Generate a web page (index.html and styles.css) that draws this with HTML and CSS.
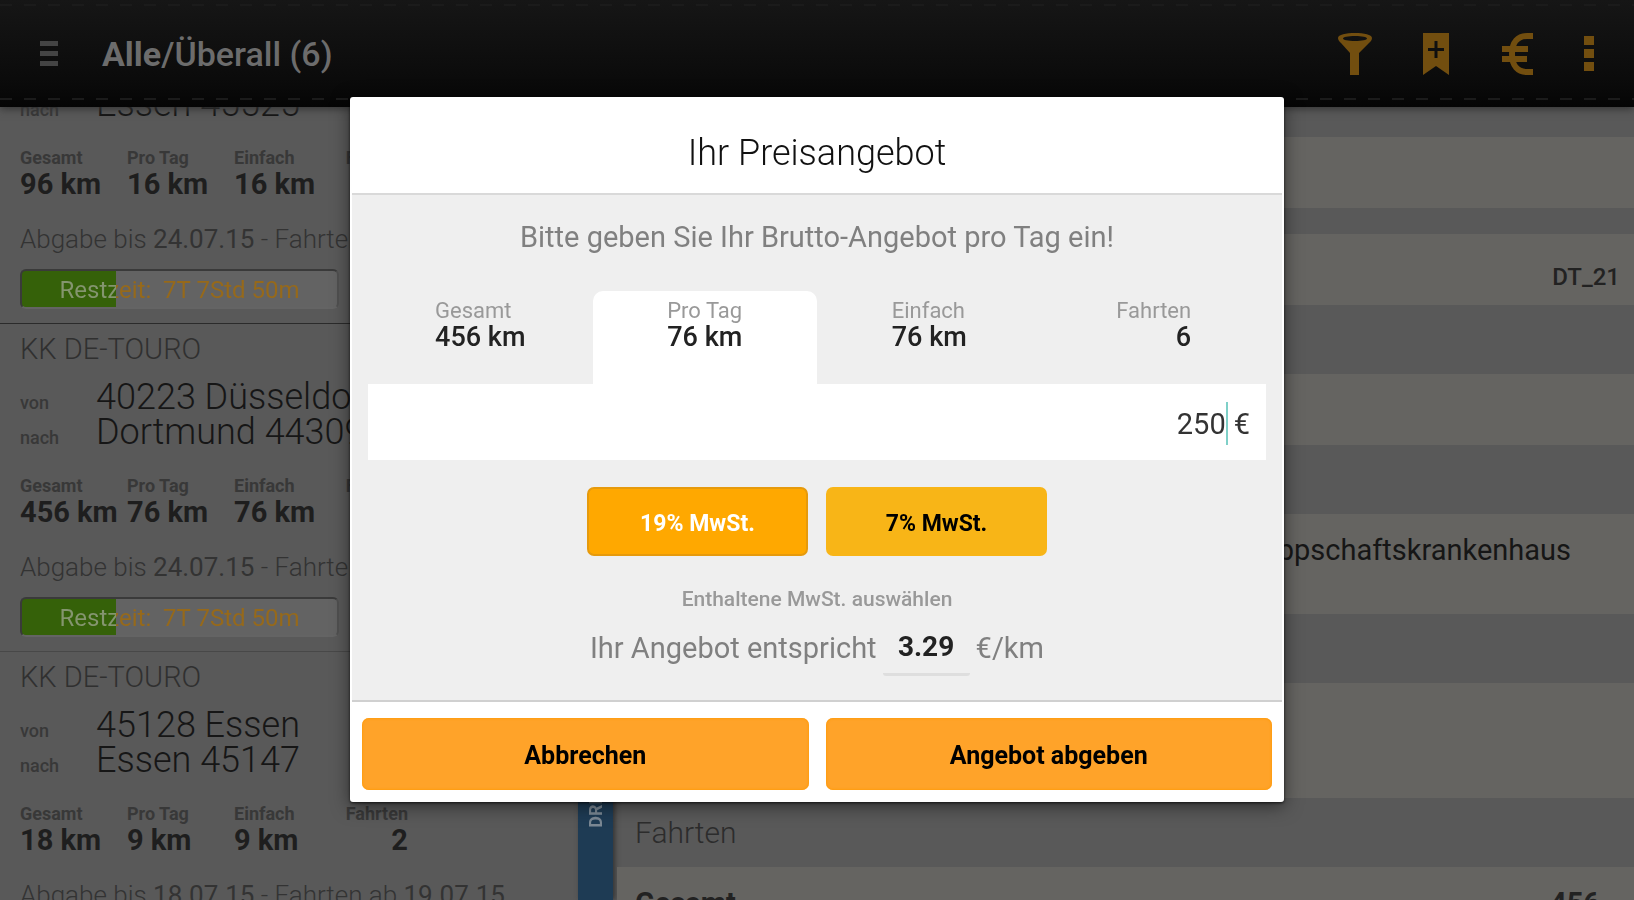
FILE: index.html
```html
<!DOCTYPE html>
<html lang="de">
<head>
    <meta charset="UTF-8">
    <meta name="viewport" content="width=device-width, initial-scale=1.0">
    <title>Ihr Preisangebot</title>
    <link rel="stylesheet" href="styles.css">
</head>
<body>

<div class="app">
    <header class="topbar">
        <button type="button" class="icon-btn menu-btn" aria-label="Menü">
            <svg width="18" height="26" viewBox="0 0 18 26"><path d="M0 0h18v5H0zM0 10h18v5H0zM0 20h18v5H0z"/></svg>
        </button>
        <h1><b>Alle</b>/Überall (6)</h1>
        <nav class="actions">
            <button type="button" class="icon-btn" aria-label="Filter">
                <svg width="34" height="44" viewBox="0 0 34 44"><path fill-rule="evenodd" d="M17 1C8 1 0 2.500 0 6c0 2 1 3 3 5l9 10v22h9V21l10-10c2-2 3-3 3-5 0-3.500-8-5-17-5zm0 3c7 0 12 1 12 2.500S24 9 17 9 5 8 5 6.500 10 4 17 4z"/></svg>
            </button>
            <button type="button" class="icon-btn" aria-label="Merken">
                <svg width="28" height="44" viewBox="0 0 28 44"><path fill-rule="evenodd" d="M1 1h26v42l-13-9-13 9zM12.500 9v7H6v3h6.500v7h3v-7H22v-3h-6.500V9z"/></svg>
            </button>
            <button type="button" class="icon-btn" aria-label="Angebot">
                <svg width="34" height="44" viewBox="0 0 34 44"><path class="line" d="M33 4h-6C18 4 12 10 12 22s6 18 15 18h6M2 17h26M2 27h25"/></svg>
            </button>
            <button type="button" class="icon-btn" aria-label="Mehr">
                <svg width="10" height="38" viewBox="0 0 10 38"><path d="M0 1h10v9H0zM0 14h10v9H0zM0 27h10v9H0z"/></svg>
            </button>
        </nav>
    </header>

    <main class="content">
        <section class="list">
            <article class="tour">
                <div class="route"><small>nach</small><span>Essen 45525</span></div>
                <dl class="distances">
                    <div><dt>Gesamt</dt><dd>96 km</dd></div>
                    <div><dt>Pro Tag</dt><dd>16 km</dd></div>
                    <div><dt>Einfach</dt><dd>16 km</dd></div>
                    <div><dt>Fahrten</dt><dd>6</dd></div>
                </dl>
                <p class="deadline">Abgabe bis <b>24.07.15</b> - Fahrten ab 27.07.15</p>
                <div class="timer"><span>Restzeit: &nbsp;7T 7Std 50m</span></div>
            </article>
            <article class="tour">
                <h2>KK DE-TOURO</h2>
                <div class="route"><small>von</small><span>40223 Düsseldorf</span></div>
                <div class="route"><small>nach</small><span>Dortmund 44309</span></div>
                <dl class="distances">
                    <div><dt>Gesamt</dt><dd>456 km</dd></div>
                    <div><dt>Pro Tag</dt><dd>76 km</dd></div>
                    <div><dt>Einfach</dt><dd>76 km</dd></div>
                    <div><dt>Fahrten</dt><dd>6</dd></div>
                </dl>
                <p class="deadline">Abgabe bis <b>24.07.15</b> - Fahrten ab 27.07.15</p>
                <div class="timer"><span>Restzeit: &nbsp;7T 7Std 50m</span></div>
            </article>
            <article class="tour">
                <h2>KK DE-TOURO</h2>
                <div class="route"><small>von</small><span>45128 Essen</span></div>
                <div class="route"><small>nach</small><span>Essen 45147</span></div>
                <dl class="distances">
                    <div><dt>Gesamt</dt><dd>18 km</dd></div>
                    <div><dt>Pro Tag</dt><dd>9 km</dd></div>
                    <div><dt>Einfach</dt><dd>9 km</dd></div>
                    <div><dt>Fahrten</dt><dd>2</dd></div>
                </dl>
                <p class="deadline">Abgabe bis <b>18.07.15</b> - Fahrten ab <b>19.07.15</b></p>
            </article>
        </section>

        <aside class="rail"><span>DRK</span></aside>

        <section class="detail">
            <div class="gap"></div>
            <div class="row"></div>
            <div class="gap"></div>
            <div class="row code">DT_21</div>
            <div class="head"></div>
            <div class="row"></div>
            <div class="head"></div>
            <div class="row tall"><span>Knappschaftskrankenhaus</span></div>
            <div class="head"></div>
            <div class="row taller"></div>
            <div class="head">Fahrten</div>
            <div class="row total"><b>Gesamt</b><b>456</b></div>
        </section>
    </main>
</div>

<div class="overlay">
    <form class="dialog" role="dialog" aria-labelledby="dialogTitle">
        <h2 id="dialogTitle">Ihr Preisangebot</h2>
        <div class="dialog-body">
            <label class="hint" for="price">Bitte geben Sie Ihr Brutto-Angebot pro Tag ein!</label>
            <div class="tabs">
                <button type="button" class="tab"><span>Gesamt<b>456 km</b></span></button>
                <button type="button" class="tab active"><span>Pro Tag<b>76 km</b></span></button>
                <button type="button" class="tab"><span>Einfach<b>76 km</b></span></button>
                <button type="button" class="tab"><span>Fahrten<b>6</b></span></button>
            </div>
            <div class="price">
                <input type="text" id="price" name="price" value="250">
                <i class="caret"></i>
                <span>€</span>
            </div>
            <div class="vat">
                <button type="button" class="selected">19% MwSt.</button>
                <button type="button">7% MwSt.</button>
            </div>
            <p class="note">Enthaltene MwSt. auswählen</p>
            <div class="rate">
                <label for="rate">Ihr Angebot entspricht</label>
                <input type="text" id="rate" name="rate" value="3.29">
                <span>€/km</span>
            </div>
        </div>
        <div class="dialog-footer">
            <button type="button">Abbrechen</button>
            <button type="submit">Angebot abgeben</button>
        </div>
    </form>
</div>

</body>
</html>
```
FILE: styles.css
```css
* {
    box-sizing: border-box;
}
body {
    font-family: Roboto, "Liberation Sans", sans-serif;
    margin: 0;
    background-color: #595959;
    color: #222;
}
h1, h2, p, dl, dd {
    margin: 0;
}
button, input {
    font-family: inherit;
    border: 0;
    padding: 0;
    margin: 0;
    background: none;
}
.app {
    display: flex;
    flex-direction: column;
    height: 100vh;
    overflow: hidden;
}

/* top bar */
.topbar {
    display: flex;
    align-items: center;
    flex: none;
    height: 107px;
    padding: 0 40px;
    position: relative;
    background: linear-gradient(#161616, #0a0a0a 80%, #050505);
    box-shadow: 0 2px 8px #333;
    z-index: 1;
}
/* leather stitching */
.topbar::before, .topbar::after {
    content: "";
    position: absolute;
    left: 0;
    right: 0;
    height: 2px;
    background: repeating-linear-gradient(90deg, #1b1b1b 0 12px, transparent 12px 24px);
}
.topbar::before {
    top: 4px;
}
.topbar::after {
    bottom: 7px;
}
.topbar h1 {
    flex: 1;
    margin-left: 44px;
    font-size: 34px;
    line-height: 40px;
    font-weight: 500;
    color: #6c6c6c;
}
.topbar h1 b {
    font-weight: 700;
}
.icon-btn {
    display: flex;
    fill: #724e0f;
}
.menu-btn {
    fill: #444;
}
.icon-btn .line {
    fill: none;
    stroke: #724e0f;
    stroke-width: 6;
}
.actions {
    display: flex;
    align-items: center;
    gap: 50px;
}

/* tour list */
.content {
    display: flex;
    flex: 1;
    min-height: 0;
}
.list {
    width: 578px;
    flex: none;
    margin-top: -28px;
}
.tour {
    padding: 8px 20px 14px;
    border-bottom: 1px solid #484848;
}
.tour:first-child {
    border-bottom-color: #2b2b2b;
}
.tour h2 {
    font-size: 29px;
    line-height: 34px;
    font-weight: 300;
    color: #303030;
    margin-bottom: 14px;
}
.route {
    display: flex;
    align-items: baseline;
    height: 35px;
    font-size: 36px;
    line-height: 35px;
    font-weight: 300;
    color: #161616;
}
.route small {
    width: 76px;
    font-size: 18px;
    line-height: 20px;
    font-weight: 500;
    color: #383838;
}
.distances {
    display: flex;
    gap: 40px;
    margin: 24px 0 25px;
}
.distances div {
    width: 67px;
    white-space: nowrap;
}
.distances div:last-child {
    text-align: right;
}
.distances dt {
    font-size: 18px;
    line-height: 24px;
    font-weight: 700;
    color: #383838;
}
.distances dd {
    font-size: 29px;
    line-height: 28px;
    font-weight: 700;
    color: #1e1e1e;
}
.deadline {
    font-size: 26px;
    line-height: 32px;
    font-weight: 300;
    color: #333;
    margin-bottom: 14px;
}
.deadline b {
    font-weight: 400;
}
.timer {
    width: 319px;
    height: 40px;
    border: 2px solid #3a3a3a;
    border-right-color: #505050;
    border-bottom-color: #646464;
    border-radius: 6px;
    background: linear-gradient(90deg, #356109 30%, #636363 30%);
    font-size: 24px;
    line-height: 38px;
    text-align: center;
}
.timer span {
    display: block;
    background: linear-gradient(90deg, #84956f 30%, #96691a 30%);
    background-clip: text;
    -webkit-background-clip: text;
    color: transparent;
}

/* tour details */
.rail {
    display: flex;
    justify-content: center;
    align-items: flex-end;
    width: 35px;
    flex: none;
    padding-bottom: 72px;
    background-color: #1e3b54;
    color: #7b8894;
    box-shadow: 2px 0 5px #333;
}
.rail span {
    writing-mode: vertical-rl;
    transform: rotate(180deg);
    font-size: 18px;
    line-height: 20px;
    font-weight: 700;
}
.detail {
    flex: 1;
    margin-left: 4px;
    overflow: hidden;
}
.detail div {
    display: flex;
    align-items: center;
    padding: 0 14px 0 18px;
}
.detail .gap {
    height: 26px;
}
.detail .gap:first-child {
    height: 30px;
}
.detail .head {
    height: 69px;
    font-size: 30px;
    font-weight: 300;
    color: #2c2c2c;
}
.detail .row {
    height: 71px;
    background-color: #656461;
    font-size: 29px;
}
.detail .tall {
    height: 100px;
    padding: 0 63px 28px 18px;
    justify-content: flex-end;
    color: #161616;
}
.detail .taller {
    height: 115px;
}
.detail .code {
    justify-content: flex-end;
    padding-top: 14px;
    font-size: 24px;
    font-weight: 500;
}
.detail .total {
    justify-content: space-between;
    padding-right: 34px;
}

/* price dialog */
.overlay {
    position: fixed;
    inset: 0;
    z-index: 2;
    display: flex;
    align-items: center;
    justify-content: center;
    padding-bottom: 2px;
}
.dialog {
    width: 90%;
    max-width: 934px;
    background-color: #fff;
    border-radius: 3px;
    box-shadow: 0 4px 18px rgba(0, 0, 0, 0.5), 0 1px 3px rgba(0, 0, 0, 0.7);
}
.dialog h2 {
    padding: 34px 0 18px;
    font-size: 36px;
    line-height: 44px;
    font-weight: 300;
    text-align: center;
    color: #111;
}
.dialog-body {
    margin: 0 2px;
    padding: 24px 16px 24px;
    border-top: 2px solid #d9d9d9;
    border-bottom: 2px solid #d0d0d0;
    background-color: #efefef;
    text-align: center;
}
.hint {
    display: block;
    margin-bottom: 36px;
    font-size: 29px;
    line-height: 36px;
    font-weight: 400;
    color: #808080;
}
.tabs {
    display: grid;
    grid-template-columns: repeat(4, 1fr);
}
.tab {
    height: 93px;
    padding-bottom: 26px;
    font-size: 22px;
    line-height: 27px;
    font-weight: 400;
    color: #999;
    border-radius: 10px 10px 0 0;
}
.tab span {
    display: inline-block;
    text-align: left;
}
.tab b {
    display: block;
    font-size: 27px;
    font-weight: 500;
    text-align: right;
    color: #222;
}
.tab.active {
    background-color: #fff;
}
.price {
    display: flex;
    align-items: center;
    height: 76px;
    padding: 4px 16px 0;
    margin-bottom: 27px;
    background-color: #fff;
    font-size: 29px;
    color: #333;
}
.price input {
    flex: 1;
    min-width: 0;
    font-size: 29px;
    text-align: right;
    color: #333;
    outline: none;
}
.caret {
    width: 2px;
    height: 43px;
    margin-right: 6px;
    background-color: #7fd0c8;
}
.vat {
    display: flex;
    justify-content: center;
    gap: 18px;
}
.vat button {
    width: 221px;
    height: 69px;
    padding-top: 4px;
    border-radius: 7px;
    background-color: #f8b517;
    font-size: 23px;
    font-weight: 700;
}
.vat .selected {
    border: 2px solid #e69a0c;
    background-color: #ffa800;
    color: #fff;
}
.note {
    margin: 30px 0 16px;
    font-size: 21px;
    line-height: 26px;
    font-weight: 500;
    color: #999;
}
.rate {
    display: flex;
    justify-content: center;
    align-items: flex-start;
    gap: 6px;
    font-size: 29px;
    line-height: 40px;
    font-weight: 400;
    color: #808080;
}
.rate input {
    width: 87px;
    height: 48px;
    padding-bottom: 8px;
    border-bottom: 3px solid #dedede;
    border-radius: 3px;
    font-size: 28px;
    line-height: 40px;
    font-weight: 700;
    text-align: center;
    color: #222;
}
.dialog-footer {
    display: flex;
    gap: 17px;
    padding: 16px 12px 12px;
}
.dialog-footer button {
    flex: 1;
    height: 72px;
    padding-top: 4px;
    border-radius: 7px;
    background-color: #ffa329;
    box-shadow: inset 0 0 2px 1px #ff9c0f;
    font-size: 25px;
    font-weight: 700;
}
```
